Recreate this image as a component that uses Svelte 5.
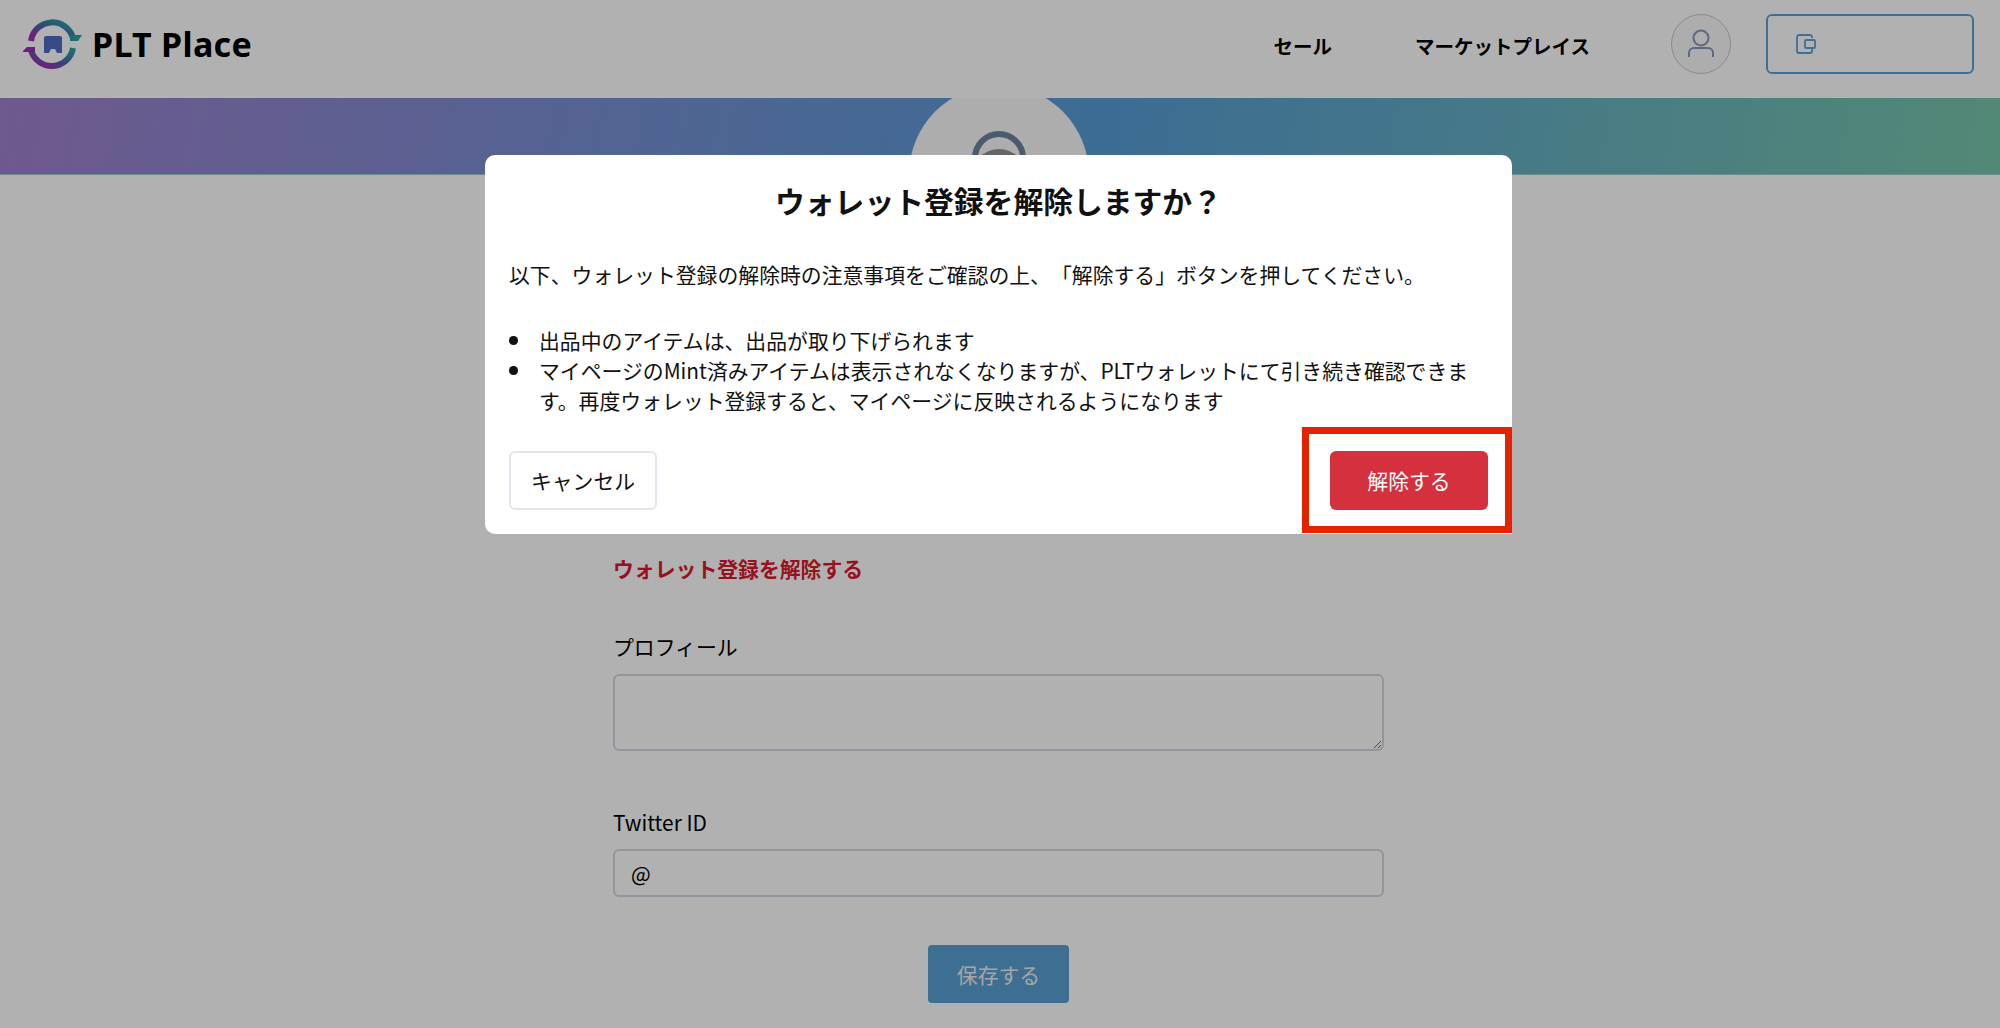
<script>
	const notes = [
		'出品中のアイテムは、出品が取り下げられます',
		'マイページのMint済みアイテムは表示されなくなりますが、PLTウォレットにて引き続き確認できます。再度ウォレット登録すると、マイページに反映されるようになります'
	];
</script>

<div class="page">
	<header class="header">
		<div class="brand">
			<svg class="logo" width="70" height="60" viewBox="0 0 70 60" fill="none">
				<defs>
					<linearGradient id="ring" x1="0" y1="1" x2="1" y2="0">
						<stop offset="0.1" stop-color="#a02fb0" />
						<stop offset="0.5" stop-color="#4a63b0" />
						<stop offset="0.9" stop-color="#2a9ea6" />
					</linearGradient>
				</defs>
				<path d="M13 27a21.500 21.500 0 0 1 42-3" stroke="url(#ring)" stroke-width="6" />
				<path d="M52 21h12l-4 6h-8z" fill="#2a9ea6" />
				<path d="M55 34a21.500 21.500 0 0 1-42 2" stroke="url(#ring)" stroke-width="6" />
				<path d="M5 37l4-4h8v5H5z" fill="#9a2fb0" />
				<path d="M28 22h14l2 1v16h-5l-2-4h-4l-2 4h-5V23z" fill="#4e6cc2" />
			</svg>
			<span class="brand-name">PLT Place</span>
		</div>
		<nav class="nav">
			<span>セール</span>
			<span>マーケットプレイス</span>
		</nav>
		<div class="user-btn">
			<svg width="28" height="30" viewBox="0 0 28 30" fill="none" stroke="#8499b5" stroke-width="2">
				<circle cx="14" cy="9" r="7.500" />
				<path d="M2 28v-4a5 5 0 0 1 5-5h14a5 5 0 0 1 5 5v4" />
			</svg>
		</div>
		<div class="wallet-btn">
			<svg width="22" height="20" viewBox="0 0 22 20" fill="none" stroke="#5ca1d8" stroke-width="1.800">
				<path d="M17 4V3a2 2 0 0 0-2-2H4a2 2 0 0 0-2 2v14a2 2 0 0 0 2 2h11a2 2 0 0 0 2-2v-2" />
				<rect x="10" y="6" width="10" height="8" rx="1" />
			</svg>
		</div>
	</header>

	<div class="banner">
		<div class="avatar">
			<svg width="60" height="60" viewBox="0 0 60 60">
				<circle cx="30" cy="30" r="24" fill="none" stroke="#6b82a1" stroke-width="6" />
				<circle cx="30" cy="49" r="28" fill="#939393" />
			</svg>
		</div>
	</div>

	<main class="form">
		<a class="unlink" href="#unlink">ウォレット登録を解除する</a>

		<label class="field profile">
			<span>プロフィール</span>
			<textarea></textarea>
		</label>

		<label class="field twitter">
			<span>Twitter ID</span>
			<input type="text" value="@" />
		</label>

		<button class="save">保存する</button>
	</main>
</div>

<div class="backdrop"></div>

<div class="modal-wrap">
	<div class="modal">
		<h2>ウォレット登録を解除しますか？</h2>
		<p>以下、ウォレット登録の解除時の注意事項をご確認の上、「解除する」ボタンを押してください。</p>
		<ul>
			{#each notes as note}
				<li>{note}</li>
			{/each}
		</ul>
		<div class="actions">
			<button class="cancel">キャンセル</button>
			<button class="confirm">解除する</button>
		</div>
		<div class="highlight"></div>
	</div>
</div>

<style>
	:global(body) {
		margin: 0;
		overflow: hidden;
		background: #fff;
		font-family: "Noto Sans CJK JP", "Noto Sans", sans-serif;
		color: #000;
		text-spacing-trim: space-all;
	}
	.page {
		height: 1028px;
		overflow: hidden;
	}

	/* HEADER */
	.header {
		position: relative;
		z-index: 2;
		height: 98px;
		background: #fff;
		display: flex;
		align-items: center;
		padding: 0 26px 10px 18px;
		box-sizing: border-box;
	}
	.brand {
		display: flex;
		align-items: center;
		gap: 4px;
		margin-right: auto;
	}
	.brand-name {
		font-family: "Noto Sans", sans-serif;
		font-size: 34px;
		font-weight: 700;
		letter-spacing: 0.3px;
	}
	.nav {
		display: flex;
		gap: 83px;
		font-size: 19.500px;
		font-weight: 700;
		margin-right: 81px;
		padding-top: 2px;
	}
	.user-btn {
		width: 60px;
		height: 60px;
		box-sizing: border-box;
		border: 1px solid #c4c8d2;
		border-radius: 50%;
		background: #f9f9fb;
		display: flex;
		align-items: center;
		justify-content: center;
		margin-right: 35px;
	}
	.wallet-btn {
		width: 208px;
		height: 60px;
		box-sizing: border-box;
		border: 2px solid #5ca1d8;
		border-radius: 6px;
		display: flex;
		align-items: center;
		padding-left: 27px;
	}

	/* BANNER */
	.banner {
		position: relative;
		height: 77px;
		background: linear-gradient(100deg, #a080cf 0%, #569dd6 55%, #78c5ab 100%);
		border-bottom: 1px solid #9cc;
		box-sizing: border-box;
	}
	.avatar {
		position: absolute;
		left: 909px;
		top: -13px;
		width: 180px;
		height: 180px;
		border-radius: 50%;
		background: #f9f9fb;
		display: flex;
		justify-content: center;
		padding-top: 43px;
		box-sizing: border-box;
	}

	/* FORM */
	.form {
		width: 771px;
		margin-left: 613px;
		padding-top: 378px;
		font-size: 20.850px;
	}
	.unlink {
		display: block;
		color: #d81a2c;
		font-weight: 700;
		line-height: 30px;
		text-decoration: none;
	}
	.field {
		display: block;
	}
	.field span {
		display: block;
		line-height: 30px;
		margin-bottom: 13px;
	}
	.profile {
		margin-top: 48px;
	}
	.twitter {
		margin-top: 56px;
	}
	.twitter span {
		margin-bottom: 12px;
	}
	textarea,
	input {
		display: block;
		width: 100%;
		box-sizing: border-box;
		border: 2px solid #d5d6e2;
		border-radius: 6px;
		background: #fff;
		font: inherit;
		padding: 6px 16px;
		margin: 0;
		outline: none;
	}
	textarea {
		height: 77px;
		resize: vertical;
	}
	input {
		height: 48px;
	}
	.save {
		display: block;
		width: 141px;
		height: 58px;
		margin: 48px auto 0;
		border: none;
		border-radius: 4px;
		background: #59a0d2;
		color: #eee;
		font: inherit;
	}

	/* MODAL */
	.backdrop {
		position: fixed;
		inset: 0;
		z-index: 5;
		background: rgba(0, 0, 0, 0.305);
	}
	.modal-wrap {
		position: fixed;
		inset: 0;
		z-index: 6;
		display: flex;
		justify-content: center;
		align-items: flex-start;
		padding: 155px 3px 0 0;
		box-sizing: border-box;
	}
	.modal {
		position: relative;
		width: 1027px;
		height: 379px;
		box-sizing: border-box;
		background: #fff;
		border-radius: 10px 10px 0 10px;
		padding: 24px 24px 24px;
		color: #111;
		font-size: 20.850px;
		line-height: 30px;
	}
	h2 {
		margin: 0;
		text-align: center;
		font-size: 29.800px;
		line-height: 42px;
		font-weight: 700;
	}
	p {
		margin: 38px 0 0;
	}
	ul {
		list-style: none;
		margin: 36px 0 0;
		padding: 0 0 0 30px;
	}
	li {
		position: relative;
	}
	li::before {
		content: "";
		position: absolute;
		left: -30px;
		top: 11px;
		width: 8.500px;
		height: 8.500px;
		border-radius: 50%;
		background: #111;
	}
	.actions {
		position: absolute;
		left: 24px;
		right: 24px;
		top: 296px;
		display: flex;
		justify-content: space-between;
	}
	.cancel,
	.confirm {
		height: 59px;
		font: inherit;
		border-radius: 6px;
		box-sizing: border-box;
		padding-bottom: 3px;
	}
	.cancel {
		width: 148px;
		background: #fff;
		border: 2px solid #e4e4ec;
		color: #111;
	}
	.confirm {
		width: 158px;
		background: #d5303e;
		border: none;
		color: #fff;
	}
	.highlight {
		position: absolute;
		right: 0;
		bottom: 1px;
		width: 210px;
		height: 106px;
		box-sizing: border-box;
		border: 7px solid #e52200;
		pointer-events: none;
	}
</style>
